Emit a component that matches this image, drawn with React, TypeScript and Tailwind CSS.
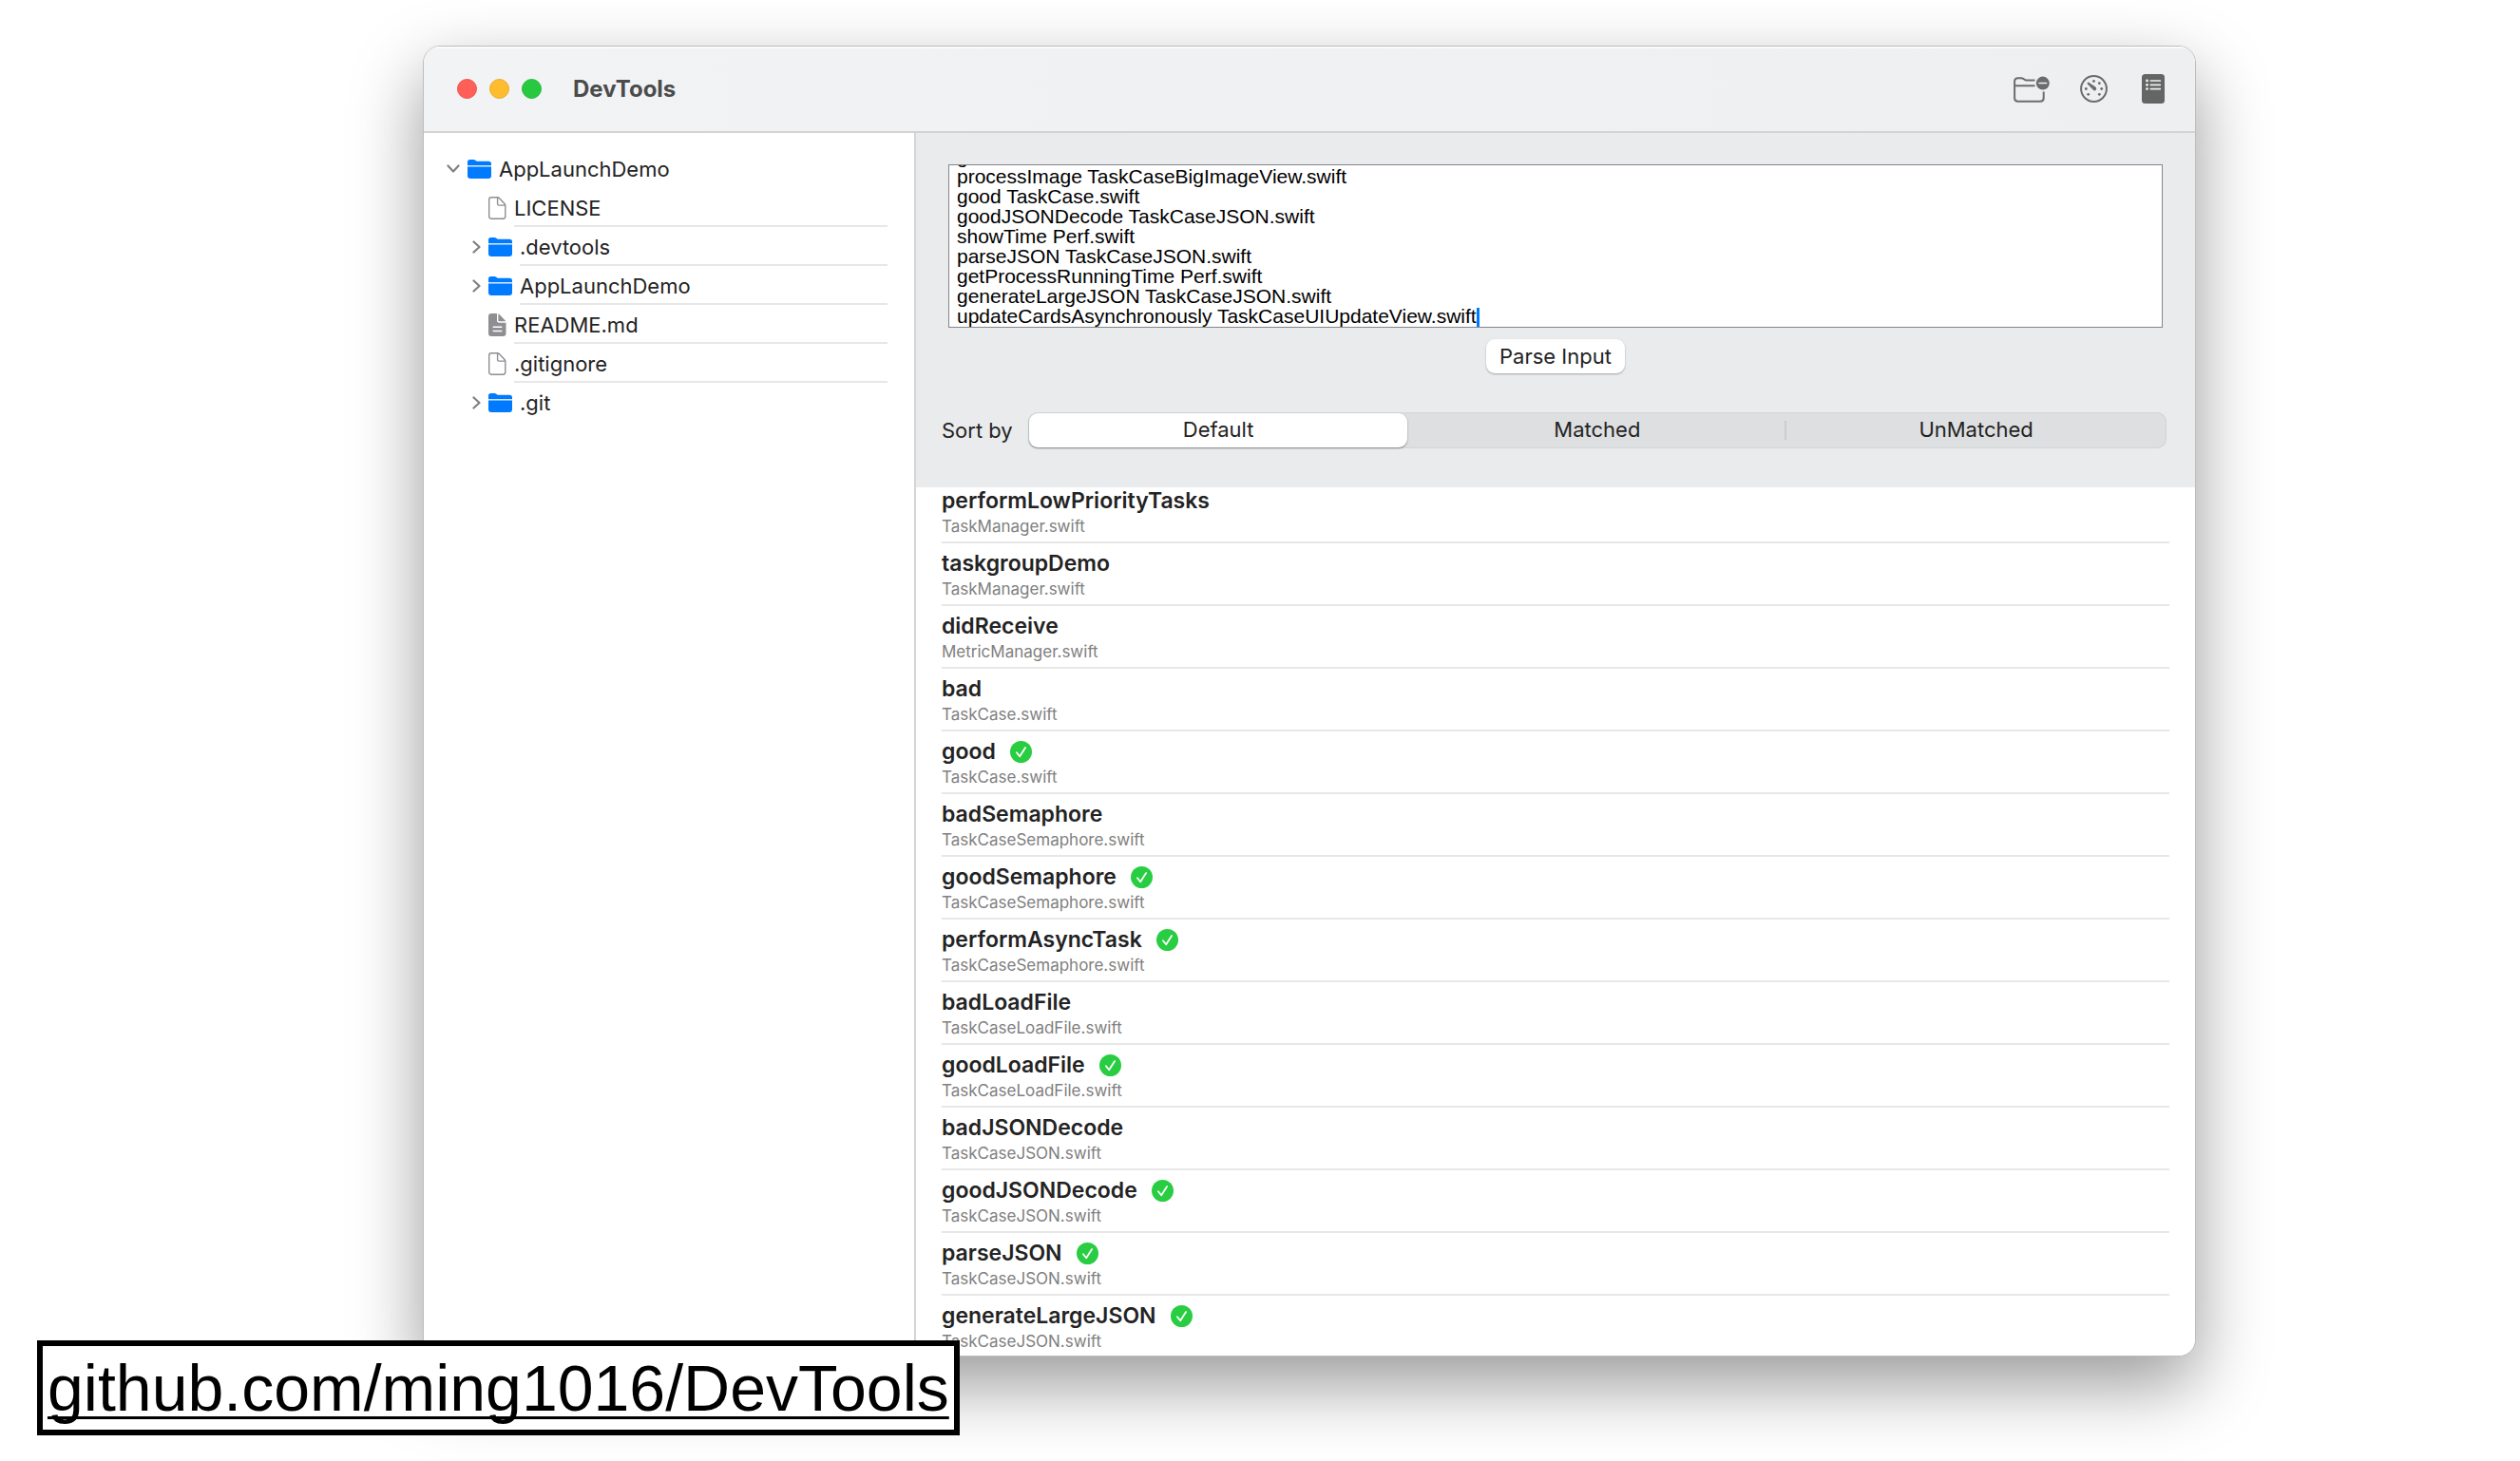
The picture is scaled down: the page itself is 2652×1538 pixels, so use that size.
import { useEffect, useRef, useState } from "react";

type NodeKind = "folder" | "file" | "readme";

const tree: { name: string; kind: NodeKind }[] = [
  { name: "LICENSE", kind: "file" },
  { name: ".devtools", kind: "folder" },
  { name: "AppLaunchDemo", kind: "folder" },
  { name: "README.md", kind: "readme" },
  { name: ".gitignore", kind: "file" },
  { name: ".git", kind: "folder" },
];

const methods: { name: string; file: string; matched?: boolean }[] = [
  { name: "performLowPriorityTasks", file: "TaskManager.swift" },
  { name: "taskgroupDemo", file: "TaskManager.swift" },
  { name: "didReceive", file: "MetricManager.swift" },
  { name: "bad", file: "TaskCase.swift" },
  { name: "good", file: "TaskCase.swift", matched: true },
  { name: "badSemaphore", file: "TaskCaseSemaphore.swift" },
  { name: "goodSemaphore", file: "TaskCaseSemaphore.swift", matched: true },
  { name: "performAsyncTask", file: "TaskCaseSemaphore.swift", matched: true },
  { name: "badLoadFile", file: "TaskCaseLoadFile.swift" },
  { name: "goodLoadFile", file: "TaskCaseLoadFile.swift", matched: true },
  { name: "badJSONDecode", file: "TaskCaseJSON.swift" },
  { name: "goodJSONDecode", file: "TaskCaseJSON.swift", matched: true },
  { name: "parseJSON", file: "TaskCaseJSON.swift", matched: true },
  { name: "generateLargeJSON", file: "TaskCaseJSON.swift", matched: true },
];

const initialInput = [
  "goodLoadFile TaskCaseLoadFile.swift",
  "processImage TaskCaseBigImageView.swift",
  "good TaskCase.swift",
  "goodJSONDecode TaskCaseJSON.swift",
  "showTime Perf.swift",
  "parseJSON TaskCaseJSON.swift",
  "getProcessRunningTime Perf.swift",
  "generateLargeJSON TaskCaseJSON.swift",
  "updateCardsAsynchronously TaskCaseUIUpdateView.swift",
].join("\n");

const sortOptions = ["Default", "Matched", "UnMatched"];

function BlueFolder() {
  return (
    <svg className="h-5 w-[25px] shrink-0" viewBox="0 0 25 20" aria-hidden="true">
      <path
        d="M0 6V2.6C0 .9 .9 0 2.6 0h3.6c.9 0 1.5.2 2.1.7l.7.6c.5.4.9.5 1.6.5H22c2 0 3 .9 3 2.8V6Z"
        fill="#007aff"
      />
      <path d="M0 6h25v1.4H0Z" fill="#cfe4fd" />
      <path d="M0 7.4h25V17c0 2-1 3-3 3H3c-2 0-3-1-3-3Z" fill="#007aff" />
    </svg>
  );
}

function FileOutline() {
  return (
    <svg className="h-6 w-[19px] shrink-0" viewBox="0 0 19 24" fill="none" stroke="#8e8e93" strokeWidth="1.4" aria-hidden="true">
      <path d="M3 .8h6.6c.8 0 1.3.2 1.8.8l5.6 5.8c.6.6.8 1 .8 1.9v11.500c0 1.600-.8 2.400-2.300 2.400H3C1.500 23.200.7 22.400.7 20.800V3.200C.7 1.600 1.500.8 3 .8Z" />
      <path d="M9.600 1v6.400c0 1.100.6 1.700 1.700 1.700h6.300" />
    </svg>
  );
}

function FileFilled() {
  return (
    <svg className="h-6 w-[19px] shrink-0" viewBox="0 0 19 24" fill="#8e8e93" aria-hidden="true">
      <path d="M3 0h6v7.500c0 1.400.8 2.200 2.200 2.200h7.300V21c0 2-1 3-3 3H3c-2 0-3-1-3-3V3c0-2 1-3 3-3Z" />
      <path d="M10.400.3c.4.2.7.4 1.100.8l6 6.100c.4.4.6.7.8 1.100h-6.800c-.8 0-1.100-.3-1.100-1.100Z" />
      <path d="M5.200 14.300h8.600M5.200 18.500h8.600" stroke="#fff" strokeWidth="1.500" strokeLinecap="round" />
    </svg>
  );
}

function ChevronRight() {
  return (
    <svg className="h-3.5 w-[9px]" viewBox="0 0 9 14" fill="none" stroke="#808080" strokeWidth="2.200" strokeLinecap="round" strokeLinejoin="round" aria-hidden="true">
      <path d="M1.500 1.500 7.500 7l-6 5.500" />
    </svg>
  );
}

function ChevronDown() {
  return (
    <svg className="h-[9px] w-3.5" viewBox="0 0 14 9" fill="none" stroke="#808080" strokeWidth="2.200" strokeLinecap="round" strokeLinejoin="round" aria-hidden="true">
      <path d="M1.500 1.500 7 7.500l5.500-6" />
    </svg>
  );
}

function FolderMinusIcon() {
  return (
    <svg className="h-7 w-[38px]" viewBox="0 0 38 28" fill="none" aria-hidden="true">
      <g stroke="#6b6c6c" strokeWidth="2">
        <path d="M22.500 4.500H13.500c-.9 0-1.400-.2-2-.7l-1.200-.9c-.6-.5-1.100-.7-2-.7H4.600C2.300 2.200 1.100 3.400 1.100 5.700v17.600c0 2.300 1.200 3.400 3.500 3.400h23.600c2.300 0 3.500-1.100 3.500-3.400V16.500" />
        <path d="M1.500 10.300h21" />
      </g>
      <circle cx="30.800" cy="7.600" r="7" fill="#6b6c6c" />
      <path d="M27 7.600h7.600" stroke="#f0f0f2" strokeWidth="1.500" strokeLinecap="round" />
    </svg>
  );
}

function GaugeIcon() {
  return (
    <svg className="size-[29px]" viewBox="0 0 29 29" aria-hidden="true">
      <circle cx="14.500" cy="14.500" r="13.400" fill="none" stroke="#6b6c6c" strokeWidth="2" />
      <g fill="#6b6c6c">
        <circle cx="14.500" cy="6.400" r="1.400" />
        <circle cx="20.300" cy="8.700" r="1.400" />
        <circle cx="22.700" cy="14.500" r="1.400" />
        <circle cx="20.300" cy="20.300" r="1.400" />
        <circle cx="8.700" cy="20.300" r="1.400" />
        <circle cx="6.300" cy="14.500" r="1.400" />
        <path d="M7.900 7.900c.5-.5 1-.4 1.600 0l6.400 4.400c1.500 1.100 1.700 2.500.8 3.500-1 1-2.500.800-3.500-.7L7.900 9.500c-.4-.6-.5-1.100 0-1.600Z" />
      </g>
    </svg>
  );
}

function NotebookIcon() {
  return (
    <svg className="h-[31px] w-6" viewBox="0 0 24 31" aria-hidden="true">
      <rect width="24" height="31" rx="3.500" fill="#646565" />
      <g fill="#eeeff1">
        <circle cx="5.500" cy="7" r="1.400" />
        <circle cx="5.500" cy="11.300" r="1.400" />
        <circle cx="5.500" cy="15.600" r="1.400" />
      </g>
      <path d="M9.300 7h10M9.300 11.300h10M9.300 15.600h10" stroke="#eeeff1" strokeWidth="1.700" strokeLinecap="round" />
    </svg>
  );
}

function CheckBadge() {
  return (
    <svg className="size-[23px]" viewBox="0 0 23 23" role="img" aria-label="Matched">
      <circle cx="11.500" cy="11.500" r="11.500" fill="#28cd41" />
      <path d="m6.900 12.300 3.300 4 5.900-9.200" fill="none" stroke="#fff" strokeWidth="1.800" strokeLinecap="round" strokeLinejoin="round" />
    </svg>
  );
}

function TitleBar() {
  return (
    <header className="flex h-[91px] items-center border-b-2 border-[#d3d3d4] bg-linear-to-r from-[#f2f3f5] to-[#eeeff1] pr-8 pl-[35px] shadow-[inset_0_2px_0_#fbfbfc]">
      <div className="flex gap-[13px]">
        <button type="button" aria-label="Close" className="size-[21px] rounded-full border border-[#ec5048] bg-[#ff5f57]" />
        <button type="button" aria-label="Minimize" className="size-[21px] rounded-full border border-[#e9ab2b] bg-[#febc2e]" />
        <button type="button" aria-label="Zoom" className="size-[21px] rounded-full border border-[#24bb3a] bg-[#28c840]" />
      </div>
      <h1 className="ml-[33px] text-2xl font-bold text-[#4b4b4c]">DevTools</h1>
      <div className="ml-auto flex items-center">
        <button type="button" aria-label="Remove folder">
          <FolderMinusIcon />
        </button>
        <button type="button" aria-label="Performance" className="ml-8">
          <GaugeIcon />
        </button>
        <button type="button" aria-label="Notes" className="ml-9">
          <NotebookIcon />
        </button>
      </div>
    </header>
  );
}

function Sidebar() {
  return (
    <nav aria-label="Files" className="w-[518px] shrink-0 border-r-2 border-[#d4d4d4] bg-white pt-[17px] pr-7">
      <div className="flex h-[41px] items-center gap-2 pl-6">
        <button type="button" aria-label="Collapse AppLaunchDemo">
          <ChevronDown />
        </button>
        <BlueFolder />
        <span className="leading-7">AppLaunchDemo</span>
      </div>
      <ul>
        {tree.map((node) => (
          <li key={node.name} className="group flex h-[41px] items-center gap-2 pl-[51px]">
            <span className="flex w-[9px] shrink-0">
              {node.kind === "folder" && (
                <button type="button" aria-label={`Expand ${node.name}`}>
                  <ChevronRight />
                </button>
              )}
            </span>
            {node.kind === "folder" && <BlueFolder />}
            {node.kind === "file" && <FileOutline />}
            {node.kind === "readme" && <FileFilled />}
            <span className="h-full flex-1 border-b-2 border-[#e7e7e7] pt-[7px] leading-7 group-last:border-transparent">
              {node.name}
            </span>
          </li>
        ))}
      </ul>
    </nav>
  );
}

function InputPanel() {
  const area = useRef<HTMLTextAreaElement>(null);
  const [sort, setSort] = useState("Default");

  useEffect(() => {
    if (area.current) area.current.scrollTop = area.current.scrollHeight;
  }, []);

  return (
    <section className="flex flex-col bg-[#eaebed] pt-[33px] pb-[41px]">
      <div className="relative mx-[34px] flex">
        <textarea
          ref={area}
          aria-label="Methods to parse"
          defaultValue={initialInput}
          className="h-[172px] w-full resize-none overflow-hidden border border-[#85858a] bg-white pl-2 font-['Liberation_Sans',Arial,sans-serif] text-[21px] leading-[21px] whitespace-pre text-black outline-none"
        />
        <span aria-hidden="true" className="absolute bottom-px left-[556px] h-5 w-[3px] bg-[#007aff]" />
      </div>
      <button
        type="button"
        className="mt-3 h-9 self-center rounded-[9px] bg-white px-[14px] leading-7 shadow-[0_1px_2px_rgba(0,0,0,0.3)]"
      >
        Parse Input
      </button>
      <div className="mt-[41px] mr-[30px] ml-[27px] flex items-center gap-4">
        <span id="sort-label">Sort by</span>
        <div
          role="radiogroup"
          aria-labelledby="sort-label"
          className="flex h-[38px] flex-1 rounded-[10px] bg-[#dedfe1] p-px shadow-[inset_0_0_2px_rgba(0,0,0,0.15)]"
        >
          {sortOptions.map((option) => (
            <label
              key={option}
              className="group relative flex flex-1 items-center justify-center rounded-[9px] pb-0.5 leading-7 has-checked:bg-white has-checked:shadow-[0_1px_2px_rgba(0,0,0,0.4)]"
            >
              <input
                type="radio"
                name="sort"
                value={option}
                checked={sort === option}
                onChange={() => setSort(option)}
                className="sr-only"
              />
              {option}
              {option === "Matched" && (
                <span className="absolute top-2 right-0 h-5 w-0.5 bg-[#cccdcf]" aria-hidden="true" />
              )}
            </label>
          ))}
        </div>
      </div>
    </section>
  );
}

function MethodList() {
  return (
    <div className="overflow-hidden bg-white">
      <ul className="-mt-[7px] mr-[27px] ml-[27px]">
        {methods.map((method) => (
          <li key={method.name} className="h-[66px] border-b-2 border-[#e7e7e7] pt-[7px] last:h-[63px] last:border-b-0">
            <div className="flex items-center gap-[15px]">
              <h2 className="text-[23px] leading-7 font-semibold">{method.name}</h2>
              {method.matched && <CheckBadge />}
            </div>
            <p className="mt-0.5 text-[17px] leading-[22px] text-[#808080]">{method.file}</p>
          </li>
        ))}
      </ul>
    </div>
  );
}

export default function App() {
  return (
    <div className="relative min-h-screen overflow-hidden bg-white pt-12 pr-[341px] pb-[111px] pl-[445px] font-[Inter,sans-serif] text-[22px] leading-7 text-[#232323]">
      <main className="overflow-hidden rounded-[18px] border border-[#bdbdbd] bg-white shadow-[0_30px_74px_rgba(0,0,0,0.4)]">
        <TitleBar />
        <div className="flex">
          <Sidebar />
          <div className="min-w-0 flex-1">
            <InputPanel />
            <MethodList />
          </div>
        </div>
      </main>
      <a
        href="https://github.com/ming1016/DevTools"
        className="absolute bottom-7 left-[39px] border-6 border-black bg-white px-[5px] font-['Liberation_Sans',Arial,sans-serif] text-[68px] leading-[88px] text-black underline decoration-3 underline-offset-6 [text-decoration-skip-ink:none]"
      >
        github.com/ming1016/DevTools
      </a>
    </div>
  );
}
